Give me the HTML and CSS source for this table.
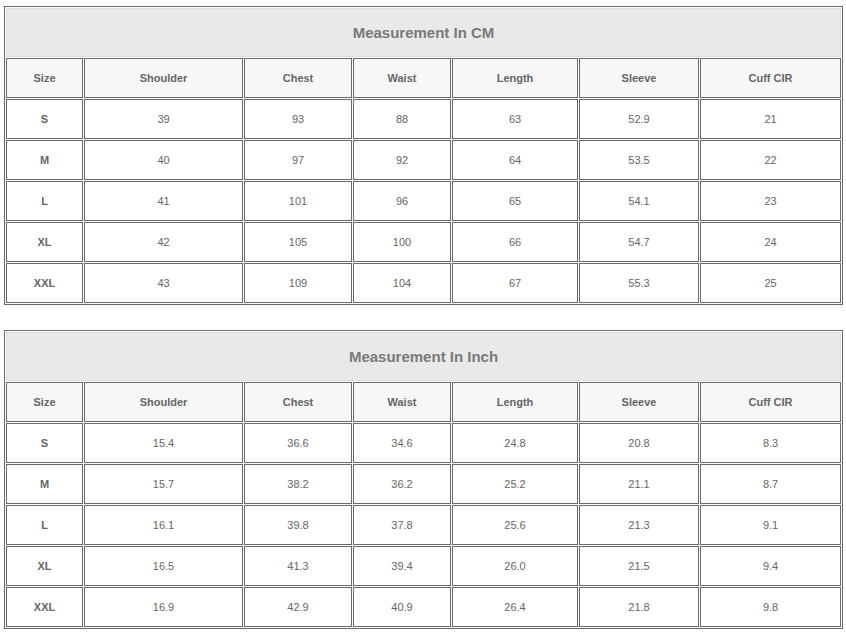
FILE: index.html
```html
<!DOCTYPE html>
<html>
<head>
<meta charset="utf-8">
<link rel="stylesheet" href="styles.css">
</head>
<body>
<div class="page">
<table class="size-table">
<colgroup>
<col class="c-size"><col class="c-shoulder"><col class="c-chest"><col class="c-waist"><col class="c-length"><col class="c-sleeve"><col class="c-cuff">
</colgroup>
<tr class="title-row"><td colspan="7" class="title">Measurement In CM</td></tr>
<tr class="head-row"><td>Size</td><td>Shoulder</td><td>Chest</td><td>Waist</td><td>Length</td><td>Sleeve</td><td>Cuff CIR</td></tr>
<tr><td class="sz">S</td><td>39</td><td>93</td><td>88</td><td>63</td><td>52.9</td><td>21</td></tr>
<tr><td class="sz">M</td><td>40</td><td>97</td><td>92</td><td>64</td><td>53.5</td><td>22</td></tr>
<tr><td class="sz">L</td><td>41</td><td>101</td><td>96</td><td>65</td><td>54.1</td><td>23</td></tr>
<tr><td class="sz">XL</td><td>42</td><td>105</td><td>100</td><td>66</td><td>54.7</td><td>24</td></tr>
<tr><td class="sz">XXL</td><td>43</td><td>109</td><td>104</td><td>67</td><td>55.3</td><td>25</td></tr>
</table>

<table class="size-table">
<colgroup>
<col class="c-size"><col class="c-shoulder"><col class="c-chest"><col class="c-waist"><col class="c-length"><col class="c-sleeve"><col class="c-cuff">
</colgroup>
<tr class="title-row"><td colspan="7" class="title">Measurement In Inch</td></tr>
<tr class="head-row"><td>Size</td><td>Shoulder</td><td>Chest</td><td>Waist</td><td>Length</td><td>Sleeve</td><td>Cuff CIR</td></tr>
<tr><td class="sz">S</td><td>15.4</td><td>36.6</td><td>34.6</td><td>24.8</td><td>20.8</td><td>8.3</td></tr>
<tr><td class="sz">M</td><td>15.7</td><td>38.2</td><td>36.2</td><td>25.2</td><td>21.1</td><td>8.7</td></tr>
<tr><td class="sz">L</td><td>16.1</td><td>39.8</td><td>37.8</td><td>25.6</td><td>21.3</td><td>9.1</td></tr>
<tr><td class="sz">XL</td><td>16.5</td><td>41.3</td><td>39.4</td><td>26.0</td><td>21.5</td><td>9.4</td></tr>
<tr><td class="sz">XXL</td><td>16.9</td><td>42.9</td><td>40.9</td><td>26.4</td><td>21.8</td><td>9.8</td></tr>
</table>
</div>
</body>
</html>
```
FILE: styles.css
```css
html, body {
  margin: 0;
  padding: 0;
  background: #ffffff;
}
.page {
  padding: 6px 4px 0 4px;
  display: flex;
  flex-direction: column;
  gap: 25px;
  font-family: "Liberation Sans", Arial, sans-serif;
}
.size-table {
  width: 839px;
  table-layout: fixed;
  border-collapse: separate;
  border-spacing: 1px;
  border: 1px solid #6a6a6a;
}
.c-size { width: 77px; }
.c-shoulder { width: 159px; }
.c-chest { width: 108px; }
.c-waist { width: 98px; }
.c-length { width: 126px; }
.c-sleeve { width: 120px; }
.c-cuff { width: 141px; }
.size-table td {
  box-sizing: border-box;
  border: 1px solid #6a6a6a;
  height: 40px;
  padding: 0;
  text-align: center;
  vertical-align: middle;
  font-size: 11px;
  color: #666666;
  background: #ffffff;
}
.size-table td.title {
  height: 49px;
  border: 1px solid #dedede;
  background: #e9e9e9;
  color: #7a7a7a;
  font-size: 15px;
  font-weight: bold;
}
.size-table .head-row td {
  background: #f7f7f7;
  font-weight: bold;
}
.size-table td.sz {
  font-weight: bold;
}
```
